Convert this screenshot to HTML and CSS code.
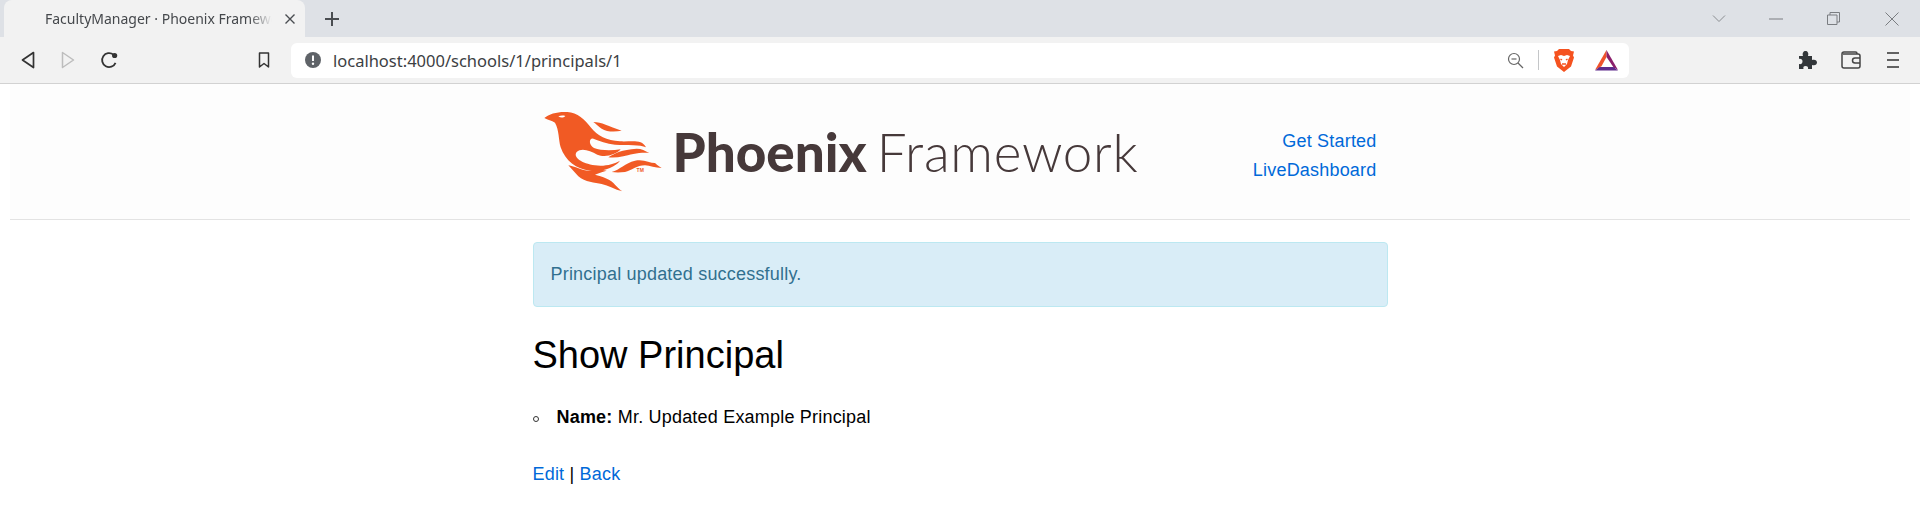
FILE: index.html
```html
<!DOCTYPE html>
<html lang="en">
<head>
    <meta charset="UTF-8">
    <meta name="viewport" content="width=device-width, initial-scale=1.0">
    <title>FacultyManager · Phoenix Framework</title>
    <link rel="stylesheet" href="styles.css">
</head>
<body>
    <!-- Browser chrome -->
    <div class="tabstrip">
        <div class="tab">
            <span class="tab-title">FacultyManager · Phoenix Framework</span>
            <svg class="tab-close" width="12" height="12" viewBox="0 0 12 12"><path d="M1.5 1.5l9 9M10.5 1.5l-9 9" stroke="#4a4d51" stroke-width="1.4" fill="none"/></svg>
        </div>
        <svg class="new-tab" width="16" height="16" viewBox="0 0 16 16"><path d="M8 1v14M1 8h14" stroke="#4a4d51" stroke-width="2" fill="none"/></svg>
        <div class="window-controls">
            <svg width="14" height="10" viewBox="0 0 14 10"><path d="M1 1.5l6 6 6-6" stroke="#8a8d91" stroke-width="1" fill="none"/></svg>
            <svg class="win-min" width="14" height="2" viewBox="0 0 14 2"><path d="M0 1h14" stroke="#7a7d81" stroke-width="1"/></svg>
            <svg class="win-max" width="13" height="13" viewBox="0 0 13 13"><path d="M3 3V.5h9.500V10H10M.5 3h9.500v9.500H.5z" stroke="#7a7d81" stroke-width="1" fill="none"/></svg>
            <svg class="win-close" width="14" height="14" viewBox="0 0 14 14"><path d="M.5.5l13 13M13.500.5l-13 13" stroke="#7a7d81" stroke-width="1" fill="none"/></svg>
        </div>
    </div>
    <div class="toolbar">
        <svg class="tool-back" width="14" height="18" viewBox="0 0 14 18"><path d="M12.500 1.500L1.500 9l11 7.500z" stroke="#333" stroke-width="1.700" fill="none" stroke-linejoin="round"/></svg>
        <svg class="tool-forward" width="14" height="18" viewBox="0 0 14 18"><path d="M1.500 1.500L12.500 9l-11 7.500z" stroke="#bdbdbd" stroke-width="1.500" fill="none" stroke-linejoin="round"/></svg>
        <svg class="tool-reload" width="18" height="18" viewBox="0 0 16 16"><path d="M13.800 10.500A6.200 6.200 0 1 1 12 3.300" stroke="#333" stroke-width="1.600" fill="none"/><circle cx="13" cy="4" r="2.300" fill="#333"/></svg>
        <svg class="tool-bookmark" width="12" height="16" viewBox="0 0 12 16"><path d="M1.500 1h9v14L6 11.500 1.500 15z" stroke="#333" stroke-width="1.500" fill="none" stroke-linejoin="round"/></svg>
        <div class="address-bar">
            <svg width="16" height="16" viewBox="0 0 16 16"><circle cx="8" cy="8" r="8" fill="#5f6368"/><path d="M8 3.500v5.500" stroke="#fff" stroke-width="2"/><circle cx="8" cy="11.800" r="1.200" fill="#fff"/></svg>
            <span class="url">localhost:4000/schools/1/principals/1</span>
            <svg class="zoom-out" width="17" height="17" viewBox="0 0 17 17"><circle cx="7" cy="7" r="5.500" stroke="#666" stroke-width="1.200" fill="none"/><path d="M11 11l5 5" stroke="#666" stroke-width="1.200"/><path d="M4.500 7h5" stroke="#666" stroke-width="1.200"/></svg>
            <span class="bar-divider"></span>
            <svg class="brave" width="20" height="23" viewBox="0 0 20 23"><path d="M5 0h10l2 2 3 .5-1 4 1 2-3 9-7 5.500-7-5.500-3-9 1-2-1-4L3 2z" fill="#f5521f"/><path d="M4 7l3-1 3 1 3-1 3 1-2 4-1 4-3 3-3-3-1-4z" fill="#fff"/><path d="M8 11l-1.500-1M12 11l1.500-1M8 15h4" stroke="#f5521f" stroke-width="1.500" fill="none"/></svg>
            <svg class="bat" width="23" height="21" viewBox="0 0 23 21"><path d="M11.500 0L0 20l6.500-3.800L11.500 7z" fill="#f0532c"/><path d="M11.500 0L23 20l-4.500-2.800L11.500 7z" fill="#8b1f6b"/><path d="M0 20.500h23l-4.500-3.500h-14z" fill="#5f2b8c"/></svg>
        </div>
        <svg class="tool-puzzle" width="19" height="18" viewBox="0 0 19 18"><path d="M1 5h4C4 2 5.500 0 7.500 0S11 2 10 5h4v4c3-1 5 .5 5 2.500S17 15 14 14v4h-4c.5-2-.5-3-2.500-3S5 16 5.500 18H1v-5c2 .5 3.500-.5 3.500-2.500S3 7.500 1 8z" fill="#33373a"/></svg>
        <svg class="tool-wallet" width="20" height="18" viewBox="0 0 20 18"><path d="M16 3V2.500A1.500 1.500 0 0 0 14.500 1H3A2 2 0 0 0 1 3v12a2 2 0 0 0 2 2h14a2 2 0 0 0 2-2V5a2 2 0 0 0-2-2H2" stroke="#444" stroke-width="1.500" fill="none"/><path d="M19 7h-5a2 2 0 0 0 0 5h5" stroke="#444" stroke-width="1.500" fill="none"/></svg>
        <svg class="tool-menu" width="12" height="16" viewBox="0 0 12 16"><path d="M0 1h12M0 8h12M0 15h12" stroke="#333" stroke-width="1.600"/></svg>
    </div>

    <!-- Page -->
    <div class="page">
        <header>
            <section class="container header-row">
                <a href="#" class="phx-logo">
                    <svg class="phx-bird" width="125" height="88" viewBox="0 0 375 264">
                        <path fill="#f15a24" d="M13 30C28 17 55 10 82 12C112 14 135 35 152 58C172 84 200 98 240 100C275 102 305 92 318 118C300 108 265 114 225 110C200 107 178 98 160 92C146 90 146 112 162 120C182 128 215 128 242 124C228 140 195 150 172 140C150 128 125 118 110 132C98 148 125 166 165 172C195 176 222 168 240 158C225 178 190 192 150 188C110 184 75 158 62 118C55 94 58 68 45 44C35 38 23 36 13 30z"/>
                        <path fill="#fff" d="M55 25c7-3 15-3 21-1-6 6-14 6-21 1z"/>
                        <path fill="#f15a24" d="M160 42c25 0 45 13 85 26-20 4-45 4-60-6-10-7-17-14-25-20z"/>
                        <path fill="#f15a24" d="M205 148c20-13 40-23 85-26 15 0 25 6 38 13-28-3-58 5-78 10-15 3-30 5-45 3z"/>
                        <path fill="#f15a24" d="M215 192c25-7 40-27 70-34 25-6 45 7 60 7 5 5 12 10 20 15-20 0-35-7-50-8-25 0-40 16-60 20-15 2-28 2-40 0z"/>
                        <path fill="#f15a24" d="M85 172c20 3 45 18 65 16 15-2 25-5 50 0-15 4-25 8-35 12 20 5 50 15 60 30 10 10 15 15 22 20-22-5-42-18-62-22-20-3-50-6-70-23-10-10-20-23-30-33z"/>
                    </svg>
                    <span class="phx-tm">TM</span>
                    <span class="phx-name"><b>Phoenix</b> Framework</span>
                </a>
                <nav>
                    <ul>
                        <li><a href="#">Get Started</a></li>
                        <li><a href="#">LiveDashboard</a></li>
                    </ul>
                </nav>
            </section>
        </header>

        <main class="container">
            <p class="alert alert-info">Principal updated successfully.</p>
            <h1>Show Principal</h1>
            <ul class="details">
                <li><strong>Name:</strong> Mr. Updated Example Principal</li>
            </ul>
            <span><a href="#">Edit</a></span> | <span><a href="#">Back</a></span>
        </main>
    </div>
</body>
</html>
```

FILE: styles.css
```css
body {
    margin: 0;
    font-family: "Liberation Sans", Arial, sans-serif;
    font-size: 18px;
    letter-spacing: 0.2px;
    color: #000;
    background-color: #fff;
}

a {
    color: #0069d9;
    text-decoration: none;
}

/* Browser chrome */
.tabstrip {
    display: flex;
    align-items: center;
    height: 37px;
    padding-left: 4px;
    background-color: #dee1e6;
}

.tab {
    display: flex;
    align-items: center;
    width: 301px;
    height: 37px;
    box-sizing: border-box;
    padding: 0 9px 0 41px;
    background-color: #f2f2f2;
    border-radius: 8px 8px 0 0;
}

.tab-title {
    flex: 1;
    overflow: hidden;
    white-space: nowrap;
    font-family: "Noto Sans", sans-serif;
    font-size: 14px;
    letter-spacing: 0;
    color: #45484c;
    -webkit-mask-image: linear-gradient(to right, #000 90%, transparent 100%);
    mask-image: linear-gradient(to right, #000 90%, transparent 100%);
}

.tab-close {
    margin-left: 12px;
}

.new-tab {
    margin-left: 19px;
}

.window-controls {
    display: flex;
    align-items: center;
    margin-left: auto;
    padding-right: 21px;
}

.win-min {
    margin-left: 43px;
}

.win-max {
    margin-left: 44px;
}

.win-close {
    margin-left: 45px;
}

.toolbar {
    display: flex;
    align-items: center;
    height: 47px;
    box-sizing: border-box;
    padding: 0 20px 0 21px;
    background-color: #f2f2f2;
    border-bottom: 1px solid #d2d2d2;
}

.tool-forward {
    margin-left: 26px;
}

.tool-reload {
    margin-left: 25px;
}

.tool-bookmark {
    margin-left: 140px;
}

.address-bar {
    display: flex;
    align-items: center;
    width: 1338px;
    height: 35px;
    box-sizing: border-box;
    margin-left: 21px;
    padding: 0 11px 0 14px;
    background-color: #fff;
    border-radius: 6px;
}

.url {
    flex: 1;
    margin-left: 12px;
    font-family: "Noto Sans", sans-serif;
    font-size: 16.5px;
    letter-spacing: 0;
    color: #3c4043;
}

.zoom-out {
    margin-right: 14px;
}

.bar-divider {
    width: 1px;
    height: 20px;
    background-color: #c4c6c8;
    margin-right: 15px;
}

.bat {
    margin-left: 21px;
}

.tool-puzzle {
    margin-left: 169px;
}

.tool-wallet {
    margin-left: 24px;
}

.tool-menu {
    margin-left: 26px;
}

/* Page */
.page {
    padding: 0 10px;
}

.container {
    width: 855px;
    margin: 0 auto;
}

header {
    height: 136px;
    box-sizing: border-box;
    background-color: #fdfdfd;
    border-bottom: 1px solid #e3e3e3;
}

.header-row {
    display: flex;
    align-items: center;
    justify-content: space-between;
    height: 100%;
}

.phx-logo {
    position: relative;
    display: flex;
    align-items: center;
    margin-left: 7px;
}

.phx-tm {
    position: absolute;
    left: 97px;
    top: 59px;
    font-size: 5px;
    font-weight: 700;
    color: #f15a24;
}

.phx-name {
    margin-left: 8px;
    font-family: Lato, sans-serif;
    font-size: 53px;
    font-weight: 300;
    letter-spacing: 0.7px;
    word-spacing: -5px;
    color: #46393a;
}

.phx-name b {
    font-weight: 900;
    letter-spacing: 0;
}

nav {
    padding-top: 8px;
}

nav ul {
    margin: 0;
    padding: 0 11px 0 0;
    list-style: none;
    text-align: right;
    line-height: 29px;
}

.alert {
    margin: 22px 0 0;
    padding: 18px 17px;
    line-height: 27px;
    border: 1px solid transparent;
    border-radius: 4px;
}

.alert-info {
    color: #31708f;
    background-color: #d9edf7;
    border-color: #bce8f1;
}

h1 {
    margin: 24px 0 0;
    font-size: 38px;
    font-weight: 400;
    letter-spacing: 0;
    line-height: 48px;
}

.details {
    margin: 25px 0 33px;
    padding: 0;
    list-style: none;
    line-height: 27px;
}

.details li::before {
    content: "";
    display: inline-block;
    width: 4px;
    height: 4px;
    margin-right: 18px;
    vertical-align: 1px;
    border: 1px solid #333;
    border-radius: 50%;
}
```
